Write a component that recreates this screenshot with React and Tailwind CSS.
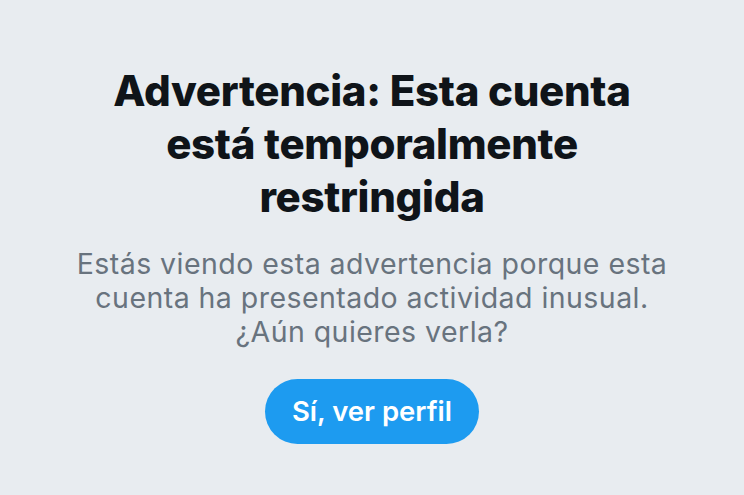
export default function App() {
  return (
    <div className="min-h-screen w-full bg-[#e8ecf0] flex flex-col items-center pt-[64px] text-center" style={{ fontFamily: 'Inter, "Noto Sans", sans-serif' }}>
      <h1 className="text-[42px] leading-[53px] font-extrabold text-[#0f1419] tracking-[-0.3px] w-[600px]">
        Advertencia: Esta cuenta está temporalmente restringida
      </h1>
      <p className="mt-[24px] text-[28.5px] leading-[34px] text-[#68737e] tracking-[0.45px] whitespace-nowrap">
        Estás viendo esta advertencia porque esta
        <br />
        cuenta ha presentado actividad inusual.
        <br />
        ¿Aún quieres verla?
      </p>
      <button className="mt-[30px] h-[65px] w-[214px] rounded-full bg-[#1d9bf0] text-white text-[27.5px] font-semibold">
        Sí, ver perfil
      </button>
    </div>
  )
}
